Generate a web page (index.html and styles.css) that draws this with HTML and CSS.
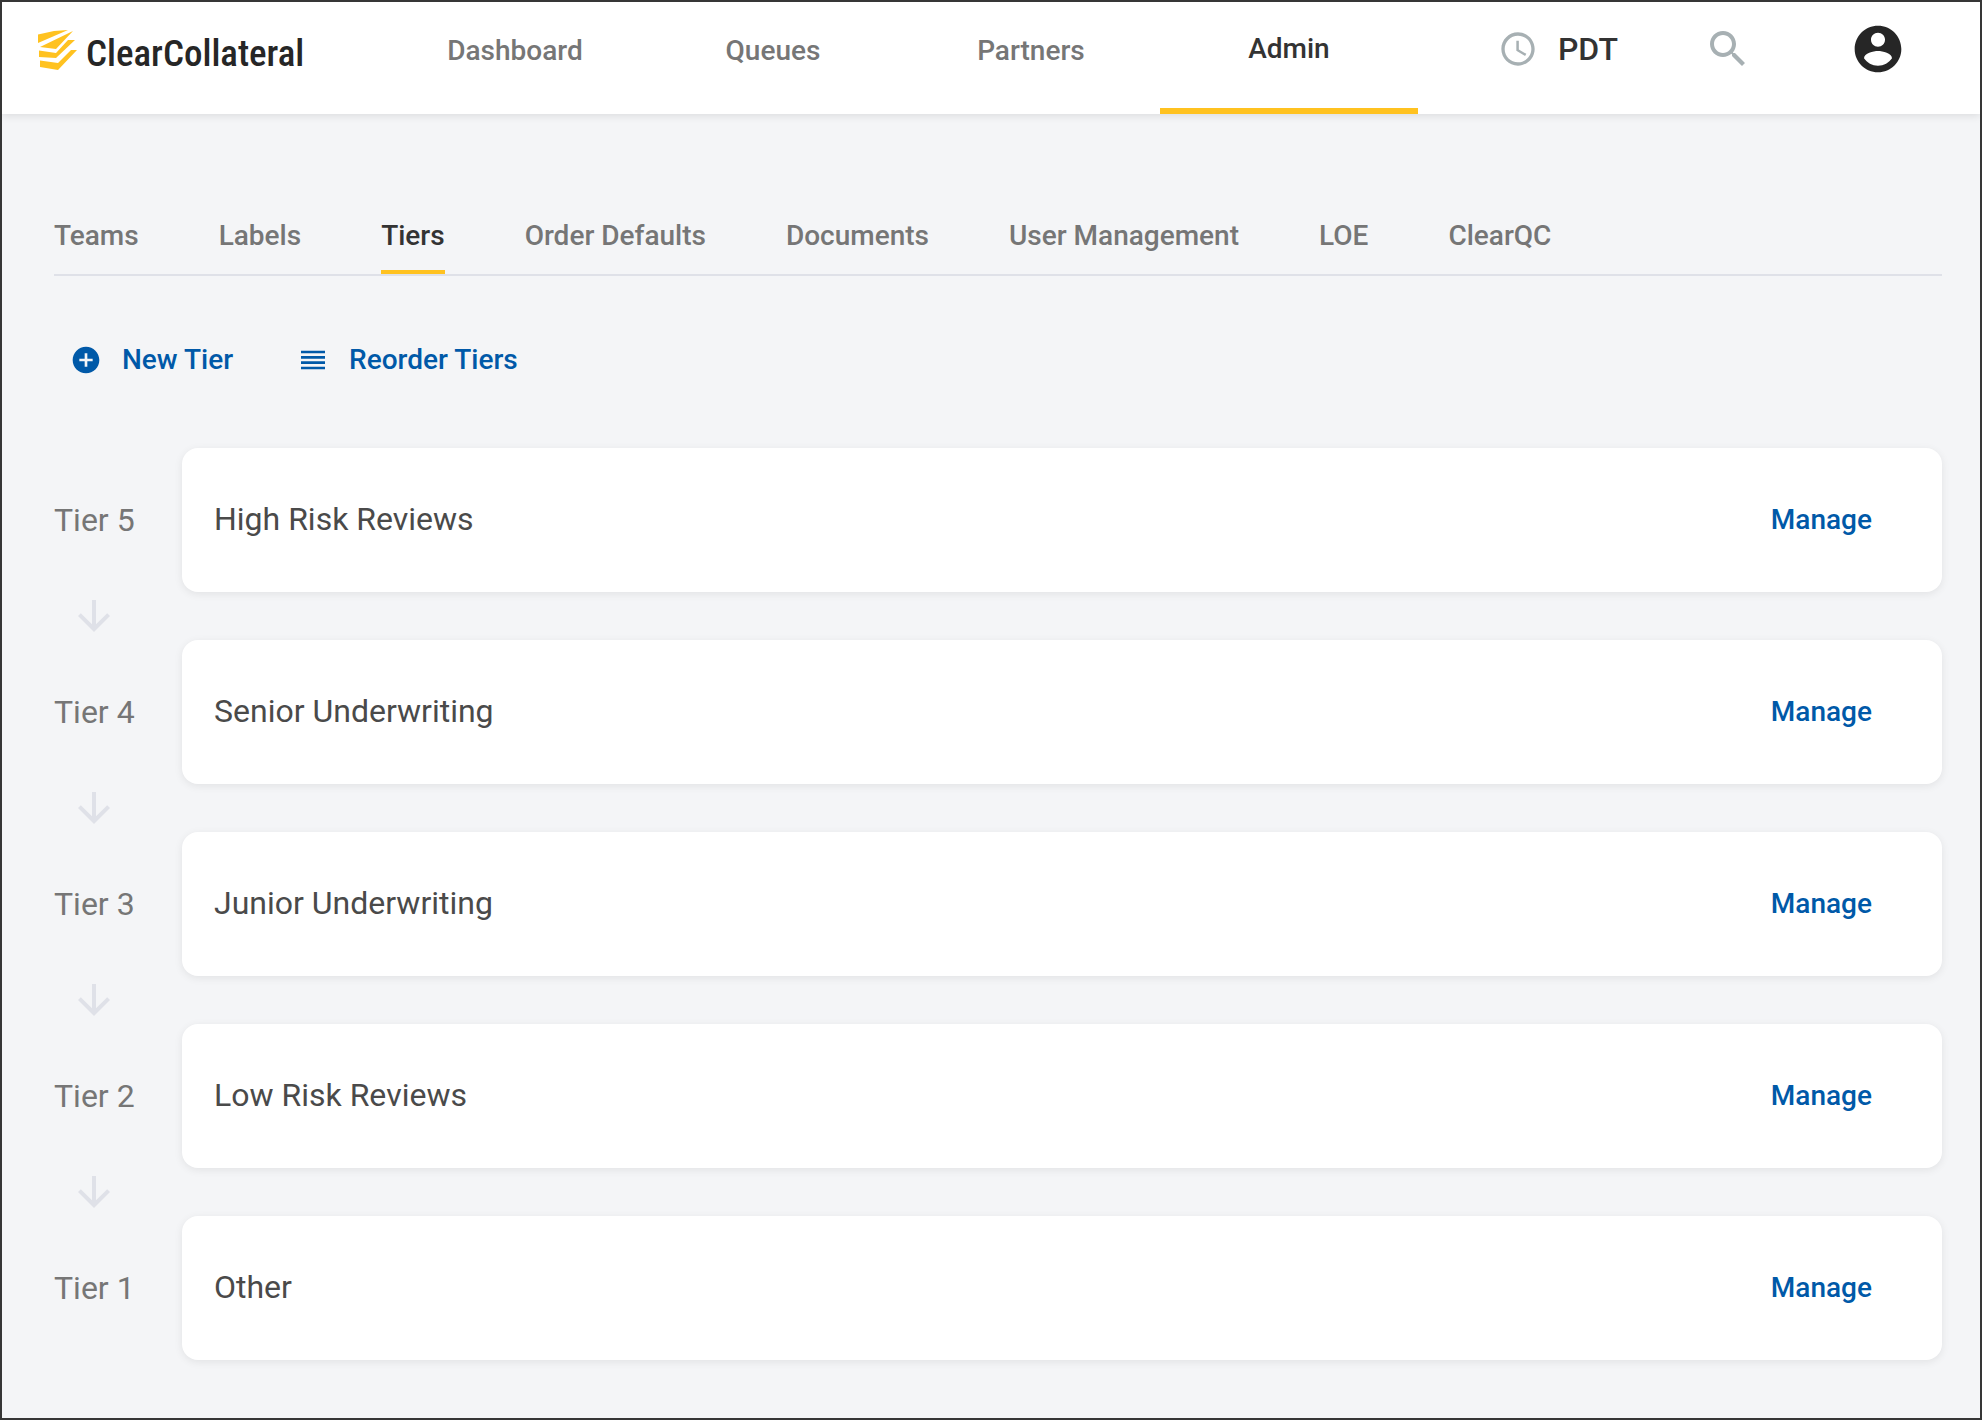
FILE: index.html
```html
<!DOCTYPE html>
<html lang="en">
<head>
  <meta charset="UTF-8" />
  <meta name="viewport" content="width=device-width, initial-scale=1" />
  <title>Tiers - ClearCollateral</title>
  <link rel="stylesheet" href="styles.css">
</head>
<body>

  <header class="header">
    <a class="logo" href="#">
      <svg class="logo-mark" viewBox="0 0 40 40" aria-hidden="true">
        <path d="M0 4.500L16 1L30 0L0 13z"/>
        <path d="M35 1L18 19L2 17z"/>
        <path d="M1 20.500L18 23L30 10H37L18 28L1 27z"/>
        <path d="M2 30.500L20 33L33 20H39L20 40L2 37z"/>
      </svg>
      <span class="logo-text">ClearCollateral</span>
    </a>

    <nav class="main-nav">
      <a href="#">Dashboard</a>
      <a href="#">Queues</a>
      <a href="#">Partners</a>
      <a class="active" href="#">Admin</a>
    </nav>

    <div class="tools">
      <button class="timezone" type="button">
        <svg class="icon-clock" viewBox="0 0 24 24" aria-hidden="true"><path d="M11.99 2C6.47 2 2 6.48 2 12s4.470 10 9.990 10C17.520 22 22 17.520 22 12S17.520 2 11.990 2zM12 20c-4.420 0-8-3.580-8-8s3.580-8 8-8 8 3.580 8 8-3.580 8-8 8zm.5-13H11v6l5.250 3.150.75-1.230-4.500-2.670z"/></svg>
        PDT
      </button>
      <button class="search" type="button" aria-label="Search">
        <svg class="icon-search" viewBox="0 0 24 24" aria-hidden="true"><path d="M15.500 14h-.79l-.28-.27C15.410 12.590 16 11.110 16 9.500 16 5.910 13.090 3 9.500 3S3 5.910 3 9.500 5.910 16 9.500 16c1.610 0 3.090-.59 4.230-1.570l.27.28v.79l5 4.990L20.490 19l-4.990-5zm-6 0C7.010 14 5 11.990 5 9.500S7.010 5 9.500 5 14 7.010 14 9.500 11.990 14 9.500 14z"/></svg>
      </button>
      <button class="account" type="button" aria-label="Account">
        <svg class="icon-account" viewBox="0 0 24 24" aria-hidden="true"><path d="M12 2C6.480 2 2 6.480 2 12s4.480 10 10 10 10-4.480 10-10S17.520 2 12 2zm0 3c1.660 0 3 1.340 3 3s-1.340 3-3 3-3-1.340-3-3 1.340-3 3-3zm0 14.200c-2.500 0-4.710-1.280-6-3.220.03-1.990 4-3.080 6-3.080 1.990 0 5.970 1.090 6 3.080-1.290 1.940-3.500 3.220-6 3.220z"/></svg>
      </button>
    </div>
  </header>

  <main class="content">
    <nav class="tabs">
      <a href="#">Teams</a>
      <a href="#">Labels</a>
      <a class="active" href="#">Tiers</a>
      <a href="#">Order Defaults</a>
      <a href="#">Documents</a>
      <a href="#">User Management</a>
      <a href="#">LOE</a>
      <a href="#">ClearQC</a>
    </nav>

    <div class="actions">
      <button type="button">
        <svg viewBox="0 0 24 24" aria-hidden="true"><path d="M12 2C6.480 2 2 6.480 2 12s4.480 10 10 10 10-4.480 10-10S17.520 2 12 2zm5 11h-4v4h-2v-4H7v-2h4V7h2v4h4v2z"/></svg>
        New Tier
      </button>
      <button type="button">
        <svg viewBox="0 0 24 24" aria-hidden="true"><path d="M3 15h18v-2H3v2zm0 4h18v-2H3v2zm0-8h18V9H3v2zm0-6v2h18V5H3z"/></svg>
        Reorder Tiers
      </button>
    </div>

    <ol class="tiers">
      <li class="tier">
        <span class="tier-level">Tier 5</span>
        <div class="card">
          <span class="card-name">High Risk Reviews</span>
          <button type="button">Manage</button>
        </div>
        <svg class="arrow" viewBox="0 0 24 24" aria-hidden="true"><path d="M20 12l-1.410-1.410L13 16.170V4h-2v12.170l-5.580-5.590L4 12l8 8 8-8z"/></svg>
      </li>
      <li class="tier">
        <span class="tier-level">Tier 4</span>
        <div class="card">
          <span class="card-name">Senior Underwriting</span>
          <button type="button">Manage</button>
        </div>
        <svg class="arrow" viewBox="0 0 24 24" aria-hidden="true"><path d="M20 12l-1.410-1.410L13 16.170V4h-2v12.170l-5.580-5.590L4 12l8 8 8-8z"/></svg>
      </li>
      <li class="tier">
        <span class="tier-level">Tier 3</span>
        <div class="card">
          <span class="card-name">Junior Underwriting</span>
          <button type="button">Manage</button>
        </div>
        <svg class="arrow" viewBox="0 0 24 24" aria-hidden="true"><path d="M20 12l-1.410-1.410L13 16.170V4h-2v12.170l-5.580-5.590L4 12l8 8 8-8z"/></svg>
      </li>
      <li class="tier">
        <span class="tier-level">Tier 2</span>
        <div class="card">
          <span class="card-name">Low Risk Reviews</span>
          <button type="button">Manage</button>
        </div>
        <svg class="arrow" viewBox="0 0 24 24" aria-hidden="true"><path d="M20 12l-1.410-1.410L13 16.170V4h-2v12.170l-5.580-5.590L4 12l8 8 8-8z"/></svg>
      </li>
      <li class="tier">
        <span class="tier-level">Tier 1</span>
        <div class="card">
          <span class="card-name">Other</span>
          <button type="button">Manage</button>
        </div>
      </li>
    </ol>
  </main>

</body>
</html>
```
FILE: styles.css
```css
* {
  box-sizing: border-box;
}
body {
  margin: 0;
  min-height: 100vh;
  border: 2px solid #363636;
  background: #f4f5f7;
  color: #333;
  font-family: Roboto, sans-serif;
  font-size: 28px;
  font-weight: 500;
  line-height: 32px;
}
a {
  color: inherit;
  text-decoration: none;
}
button {
  padding: 0;
  border: none;
  background: none;
  color: inherit;
  font: inherit;
  cursor: pointer;
}
svg {
  display: block;
  flex: none;
  fill: currentColor;
}

/* header */
.header {
  display: flex;
  height: 112px;
  padding-right: 74px;
  background: #fff;
  box-shadow: 0 2px 8px rgba(0,0,0,0.1);
}
.logo {
  display: flex;
  gap: 8px;
  width: 384px;
  padding: 28px 0 0 36px;
  flex: none;
}
.logo-mark {
  width: 40px;
  height: 40px;
  color: #ffc220;
}
.logo-text {
  color: #262626;
  font-family: "Roboto Condensed", "Liberation Sans Narrow", Roboto, sans-serif;
  font-size: 37px;
  font-weight: 500;
  line-height: 48px;
}
.main-nav {
  display: flex;
  flex: 1;
  color: #767676;
}
.main-nav a {
  flex: 1;
  padding-top: 33px;
  text-align: center;
}
.main-nav .active {
  padding-top: 31px;
  border-bottom: 6px solid #ffc220;
  color: #333;
}
.tools {
  display: flex;
  align-items: center;
  height: 94px;
  margin-left: 80px;
}
.timezone {
  display: flex;
  align-items: center;
  gap: 20px;
  margin-right: 86px;
  font-size: 32px;
}
.search {
  margin-right: 98px;
}
.icon-clock {
  width: 40px;
  height: 40px;
  color: #a7b0b3;
}
.icon-search {
  width: 48px;
  height: 48px;
  color: #a7b0b3;
}
.icon-account {
  width: 56px;
  height: 56px;
  color: #262626;
}

/* page */
.content {
  padding: 106px 38px 56px 52px;
}
.tabs {
  display: flex;
  gap: 80px;
  border-bottom: 2px solid #dfe1e8;
  color: #767676;
}
.tabs a {
  padding-bottom: 18px;
  border-bottom: 4px solid transparent;
}
.tabs .active {
  border-color: #ffc220;
  color: #333;
}
.actions {
  display: flex;
  gap: 64px;
  padding: 68px 16px 72px;
  color: #0059a8;
}
.actions button {
  display: flex;
  align-items: center;
  gap: 20px;
}
.actions svg {
  width: 32px;
  height: 32px;
}

/* tier list */
.tiers {
  margin: 0;
  padding: 0;
  list-style: none;
}
.tier {
  display: grid;
  grid-template-columns: 80px 1fr;
  grid-template-rows: 144px;
  grid-auto-rows: 48px;
  column-gap: 48px;
  align-items: center;
}
.tier-level {
  color: #767676;
  font-size: 32px;
  font-weight: 400;
  white-space: nowrap;
}
.card {
  display: flex;
  align-items: center;
  justify-content: space-between;
  height: 100%;
  padding: 0 70px 0 32px;
  border-radius: 16px;
  background: #fff;
  box-shadow: 0 2px 8px rgba(0,0,0,0.08);
}
.card-name {
  padding-bottom: 2px;
  color: #4a4a4a;
  font-size: 32px;
  font-weight: 400;
}
.card button {
  color: #0059a8;
}
.arrow {
  width: 48px;
  height: 48px;
  justify-self: center;
  color: #dfe1e8;
}
```
